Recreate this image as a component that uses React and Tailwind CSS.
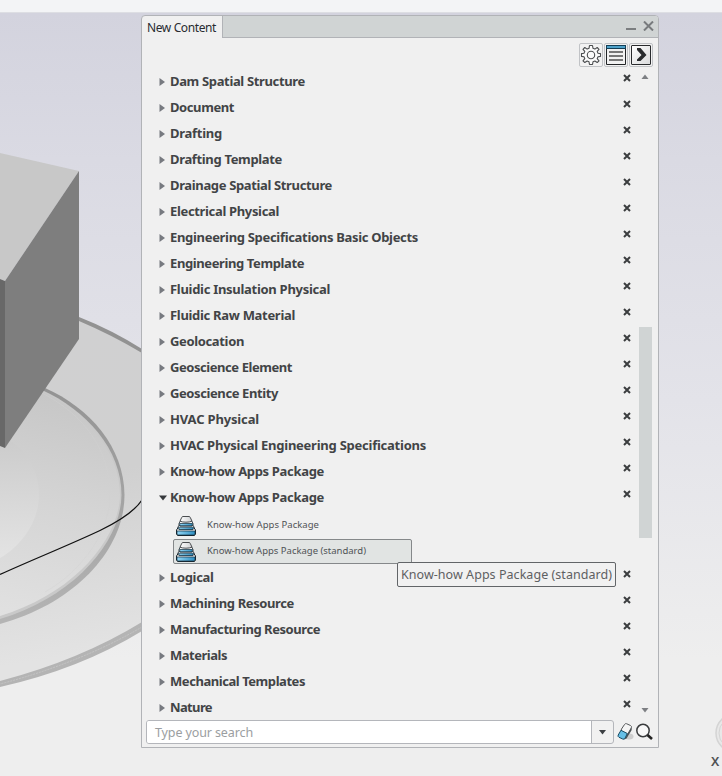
import React from "react";

const before = [
  ["Dam Spatial Structure", 135],
  ["Document", 64],
  ["Drafting", 52],
  ["Drafting Template", 112],
  ["Drainage Spatial Structure", 162],
  ["Electrical Physical", 109],
  ["Engineering Specifications Basic Objects", 248],
  ["Engineering Template", 134],
  ["Fluidic Insulation Physical", 160],
  ["Fluidic Raw Material", 125],
  ["Geolocation", 74],
  ["Geoscience Element", 122],
  ["Geoscience Entity", 108],
  ["HVAC Physical", 89],
  ["HVAC Physical Engineering Specifications", 256],
  ["Know-how Apps Package", 154],
];
const after = [
  ["Logical", 43.5],
  ["Machining Resource", 124],
  ["Manufacturing Resource", 150],
  ["Materials", 57],
  ["Mechanical Templates", 135],
  ["Nature", 42],
];

// Text spaced so that it fills exactly the given width.
function Fit({ text, width, className }) {
  const ref = React.useRef(null);
  const [spacing, setSpacing] = React.useState(0);
  React.useLayoutEffect(() => {
    const natural = ref.current.getBoundingClientRect().width;
    setSpacing((s) => s + (width - natural) / text.length);
  }, [text, width]);
  return (
    <span ref={ref} className={"inline-block whitespace-pre " + className} style={{ letterSpacing: spacing }}>
      {text}
    </span>
  );
}

function Remove() {
  return (
    <svg className="mb-[7px] h-[8px] w-[8px] shrink-0" viewBox="0 0 8 8">
      <path d="M1 1L7 7M7 1L1 7" stroke="#3b3d3f" strokeWidth="2" />
    </svg>
  );
}

function Row({ text, width, open }) {
  return (
    <div className="flex h-[26px] shrink-0 items-center pl-[17px] pr-[28px]">
      <svg className="mt-px h-[8px] w-[8px] shrink-0" viewBox="0 0 8 8">
        {open ? <path d="M0 1.5H8L4 6.5Z" fill="#36393c" /> : <path d="M.5 0V8L6 4Z" fill="#777a80" />}
      </svg>
      <div className="-mt-[2px] flex-1 pl-[3px] leading-[18px]">
        <Fit text={text} width={width} className="text-[13px] font-bold text-[#424446]" />
      </div>
      <Remove />
    </div>
  );
}

function PackageIcon() {
  return (
    <svg className="h-[20px] w-[20px] shrink-0" viewBox="0 0 20 20">
      <defs>
        <linearGradient id="pkgBlue" x2="1" y2="0">
          <stop offset="0" stopColor="#93d6f5" />
          <stop offset="1" stopColor="#2f8fc2" />
        </linearGradient>
        <linearGradient id="pkgTop" x2="1" y2="0">
          <stop offset="0" stopColor="#ffffff" />
          <stop offset="1" stopColor="#cfd1d3" />
        </linearGradient>
      </defs>
      <path d="M.5 14L2.500 11H17.500L19.500 14V18L18.500 19.500H1.500L.5 18Z" fill="#f7f7f7" stroke="#19242b" />
      <path d="M1 15H19V18L18.200 19H1.800L1 18Z" fill="url(#pkgBlue)" stroke="#102c3c" strokeWidth=".7" />
      <path d="M2 11L3.700 8H16.300L18 11V12.500L17 13.600H3L2 12.500Z" fill="#f7f7f7" stroke="#19242b" strokeWidth=".8" />
      <path d="M2.500 11.200H17.500L16.800 13.400H3.200Z" fill="url(#pkgBlue)" stroke="#102c3c" strokeWidth=".7" />
      <path d="M3 7.500L4.500 4.500H15.500L17 7.500V9L16 10H4L3 9Z" fill="#f7f7f7" stroke="#19242b" strokeWidth=".8" />
      <path d="M3.500 7.500H16.500L16 9.700H4Z" fill="url(#pkgBlue)" stroke="#102c3c" strokeWidth=".7" />
      <path d="M4 5.200L5.700 1.500Q6 .5 7 .5H13Q14 .5 14.300 1.500L16 5.200Q13.500 6.200 10 6.200T4 5.200Z" fill="url(#pkgTop)" stroke="#4a4d50" />
    </svg>
  );
}

function Scene() {
  return (
    <svg className="absolute inset-0" width="722" height="776" viewBox="0 0 722 776">
      <defs>
        <linearGradient id="plate" gradientUnits="userSpaceOnUse" x1="60" y1="330" x2="110" y2="650">
          <stop offset="0" stopColor="#d0d0d1" />
          <stop offset=".45" stopColor="#d0d0d0" />
          <stop offset="1" stopColor="#e3e3e3" />
        </linearGradient>
        <linearGradient id="disc" gradientUnits="userSpaceOnUse" x1="60" y1="390" x2="10" y2="620">
          <stop offset="0" stopColor="#c6c6c6" />
          <stop offset=".5" stopColor="#d5d5d5" />
          <stop offset="1" stopColor="#e1e1e1" />
        </linearGradient>
        <linearGradient id="core" x2="0" y2="1">
          <stop offset="0" stopColor="#cbcbcb" />
          <stop offset="1" stopColor="#e3e3e3" />
        </linearGradient>
        <linearGradient id="rim" gradientUnits="userSpaceOnUse" x1="0" y1="380" x2="0" y2="620">
          <stop offset="0" stopColor="#929292" />
          <stop offset="1" stopColor="#b4b4b4" />
        </linearGradient>
      </defs>
      <path d="M0 295Q40 302 79 317Q112 330 142 349V631Q80 669 0 687Z" fill="url(#rim)" />
      <path d="M0 300Q40 306 79 321Q112 335 142 353V622Q80 660 0 681Z" fill="url(#plate)" />
      <path d="M142 627Q80 663 0 684" fill="none" stroke="#c8c8c8" strokeWidth=".8" strokeDasharray="2 1" />
      <path d="M0 376Q22 378 45 388C90 408 124 447 124.500 495C124.500 549 76 603 0 624Z" fill="url(#rim)" />
      <path d="M0 380Q22 381 42 390C86 410 121.500 449 121.500 495C121 542 74 597 0 619Z" fill="#c9c9c9" />
      <path d="M0 381Q22 382 40 391C84 410 120 450 120 495C119 540 73 594 0 616Z" fill="url(#disc)" />
      <path d="M40 392C84 414 110 450 110 495C110 530 84 570 45 592" fill="none" stroke="#d2d2d2" strokeWidth=".7" opacity=".6" />
      <path d="M0 436C25 445 39 470 39 495C39 520 23 545 0 558Z" fill="url(#core)" />
      <path d="M0 574.500C34 559 67 546 100 530.500Q132 515 142 500" fill="none" stroke="#111" strokeWidth="1.300" />
      <path d="M0 153L79 171L5 281L0 279Z" fill="#c8c8c8" />
      <path d="M79 171V339L5 448V281Z" fill="#7e7e7e" />
      <path d="M0 279L5 281V448L0 446Z" fill="#686868" />
      <g fill="none" stroke="#d4d4d4">
        <circle cx="735" cy="733" r="19" fill="#e8e8e8" strokeWidth="1.500" />
        <circle cx="735" cy="733" r="16" />
      </g>
    </svg>
  );
}

const toolButton = "flex h-[24px] w-[24px] items-center justify-center rounded-[2px] border border-[#c1c3c6] bg-[#f2f2f2]";

export default function App() {
  return (
    <div className="relative h-[776px] w-[722px] overflow-hidden bg-[linear-gradient(#d3d3de_13px,#dadae3_160px,#e3e3e9_400px,#eeeeee_660px)] font-['Noto_Sans',sans-serif]">
      <Scene />
      <div className="relative h-[13px] border-b border-[#dddee3] bg-[#f3f4f6]" />
      <span className="absolute left-[711px] top-[753px] text-[13px] font-semibold leading-[16px] text-[#505255]">X</span>

      <section className="absolute left-[141px] top-[15px] flex h-[733px] w-[518px] flex-col rounded-t-[4px] border border-[#b1b3b7] bg-[#f0f0f0]">
        <header className="flex h-[22px] shrink-0">
          <div className="w-[81px] shrink-0 border-r border-[#b1b3b7] pl-[5px] pt-[2px] leading-[16px]">
            <Fit text="New Content" width={69} className="text-[12px] text-[#292c30]" />
          </div>
          <div className="flex flex-1 justify-end gap-[7px] rounded-tr-[3px] border-b border-[#b1b3b7] bg-[#d0d4d4] pr-[4px]">
            <div className="mt-[12px] h-[2px] w-[10px] bg-[#7b7e80]" />
            <svg className="mt-[5px] h-[10px] w-[11px]" viewBox="0 0 11 10">
              <path d="M1 .5L10 9.500M10 .5L1 9.500" stroke="#777a7d" strokeWidth="2" />
            </svg>
          </div>
        </header>

        <div className="flex h-[30px] shrink-0 items-start justify-end gap-px pr-[5px] pt-[5px]">
          <div className={toolButton}>
            <svg width="22" height="22" viewBox="0 0 22 22" fill="#fafafa" stroke="#4b4d4f" strokeWidth="1.100">
              <path d="M9.500 1.500H12.500L13 4.300L14.900 5.100L17.200 3.500L19 5.300L17.200 7.400L18 9.200L20.500 9.600V12.400L18 12.800L17.200 14.700L19 16.800L17.200 18.500L14.900 17L13 17.800L12.500 20.500H9.500L9 17.800L7.100 17L4.800 18.500L3 16.800L4.800 14.700L4 12.800L1.500 12.400V9.600L4 9.200L4.800 7.400L3 5.300L4.800 3.500L7.100 5.100L9 4.300Z" strokeLinejoin="round" />
              <circle cx="11" cy="11" r="3.700" />
            </svg>
          </div>
          <div className={toolButton}>
            <svg className="shrink-0" width="20" height="20" viewBox="0 0 20 20">
              <path d="M.5.500H19.500V19.500H.5Z" fill="#f1f1f1" stroke="#222426" />
              <path d="M0 0H20V4H0Z" fill="#143f56" />
              <path d="M1 1H19V3H1Z" fill="#4fa3cb" />
              <path d="M3 7H17M3 11H17M3 15H17" stroke="#777" strokeWidth="2" />
            </svg>
          </div>
          <div className={toolButton}>
            <svg className="shrink-0" width="20" height="20" viewBox="0 0 20 20">
              <defs>
                <linearGradient id="arrowFace" x2="1" y2="1">
                  <stop offset="0" stopColor="#fff" />
                  <stop offset="1" stopColor="#d9dadb" />
                </linearGradient>
              </defs>
              <rect x=".5" y=".5" width="19" height="19" rx=".5" fill="url(#arrowFace)" stroke="#292b2d" />
              <path d="M6 3H9.500L15.500 10L9.500 16H6V14.500L10.500 10L6 5Z" fill="#292b2d" />
            </svg>
          </div>
        </div>

        <div className="flex h-[648px] shrink-0">
          <div className="flex w-[497px] shrink-0 flex-col overflow-hidden">
            <div className="w-[517px]">
              {before.map(([text, width], i) => (
                <Row key={i} text={text} width={width} />
              ))}
              <Row text="Know-how Apps Package" width={154} open />
              <div className="h-[54px] pl-[31px] pt-[3px]">
                <div className="flex h-[25px] items-center pl-[3px] pt-px">
                  <PackageIcon />
                  <Fit text="Know-how Apps Package" width={112} className="-mt-[2px] ml-[11px] text-[9.500px] leading-[14px] text-[#505356]" />
                </div>
                <div className="mt-px flex h-[25px] w-[239px] items-center rounded-[2px] border border-[#85888a] bg-[#e1e4e3] pl-[2px]">
                  <PackageIcon />
                  <Fit text="Know-how Apps Package (standard)" width={159} className="-mt-[2px] ml-[11px] text-[9.500px] leading-[14px] text-[#505356]" />
                </div>
              </div>
              {after.map(([text, width]) => (
                <Row key={text} text={text} width={width} />
              ))}
            </div>
          </div>
          <div className="flex w-[13px] shrink-0 flex-col items-center">
            <svg className="mr-px mt-[6px] h-[5px] w-[8px] shrink-0" viewBox="0 0 8 5">
              <path d="M.5 5H7.500L4 .5Z" fill="#7d7f83" />
            </svg>
            <div className="mt-[248px] h-[211px] w-[13px] shrink-0 bg-[#d0d4d4]" />
            <svg className="mr-px mt-[170px] h-[5px] w-[8px] shrink-0" viewBox="0 0 8 5">
              <path d="M.5 0H7.500L4 4.500Z" fill="#7d7f83" />
            </svg>
          </div>
        </div>

        <div className="flex shrink-0 pl-[4px] pt-[4px]">
          <div className="flex h-[24px] w-[468px] shrink-0 rounded-[3px] border border-[#b4b6bb] bg-[#f1f1f1]">
            <div className="w-[445px] rounded-l-[2px] border-r border-[#b4b6bb] bg-white pl-[8px] leading-[21px]">
              <Fit text="Type your search" width={98} className="text-[12.500px] text-[#9b9ea1]" />
            </div>
            <div className="flex flex-1 items-center justify-center">
              <svg width="7" height="5" viewBox="0 0 7 5">
                <path d="M0 0H7L3.500 4.500Z" fill="#3c3f43" />
              </svg>
            </div>
          </div>
          <svg className="ml-[2px] mt-[2px]" width="19" height="20" viewBox="0 0 19 20">
            <ellipse cx="13" cy="14.500" rx="4.500" ry="3" fill="#aaa" opacity=".5" />
            <path d="M5.500 7L8.500 2.500Q9.300 1.300 10.500 1.700L14.500 3.500Q16 4.300 15.300 5.800L11.500 12.500L5 9Z" fill="#f5f5f5" stroke="#55585a" />
            <path d="M11.500 12L15.500 5.500L15.700 8L10.500 16.500L8.500 17.500Z" fill="#4c5154" />
            <path d="M5 8.300L11.300 11.500L9 16.300Q8.300 17.700 6.700 17L3 15.300Q1.500 14.500 2.200 13Z" fill="#65bfe6" stroke="#174a63" />
          </svg>
          <svg className="mt-[3px]" width="20" height="19" viewBox="0 0 20 19">
            <circle cx="8" cy="7.500" r="6.200" fill="#f8f8f8" stroke="#393b3d" strokeWidth="1.500" />
            <path d="M12.500 12L17 16" stroke="#222" strokeWidth="2.600" />
          </svg>
        </div>
      </section>

      <div className="absolute left-[397px] top-[562px] h-[25px] w-[219px] rounded-[2px] border border-[#626568] bg-[#f1f1f1] pl-[3px] leading-[21px]">
        <Fit text="Know-how Apps Package (standard)" width={211} className="text-[12.500px] text-[#5e6062]" />
      </div>
    </div>
  );
}
